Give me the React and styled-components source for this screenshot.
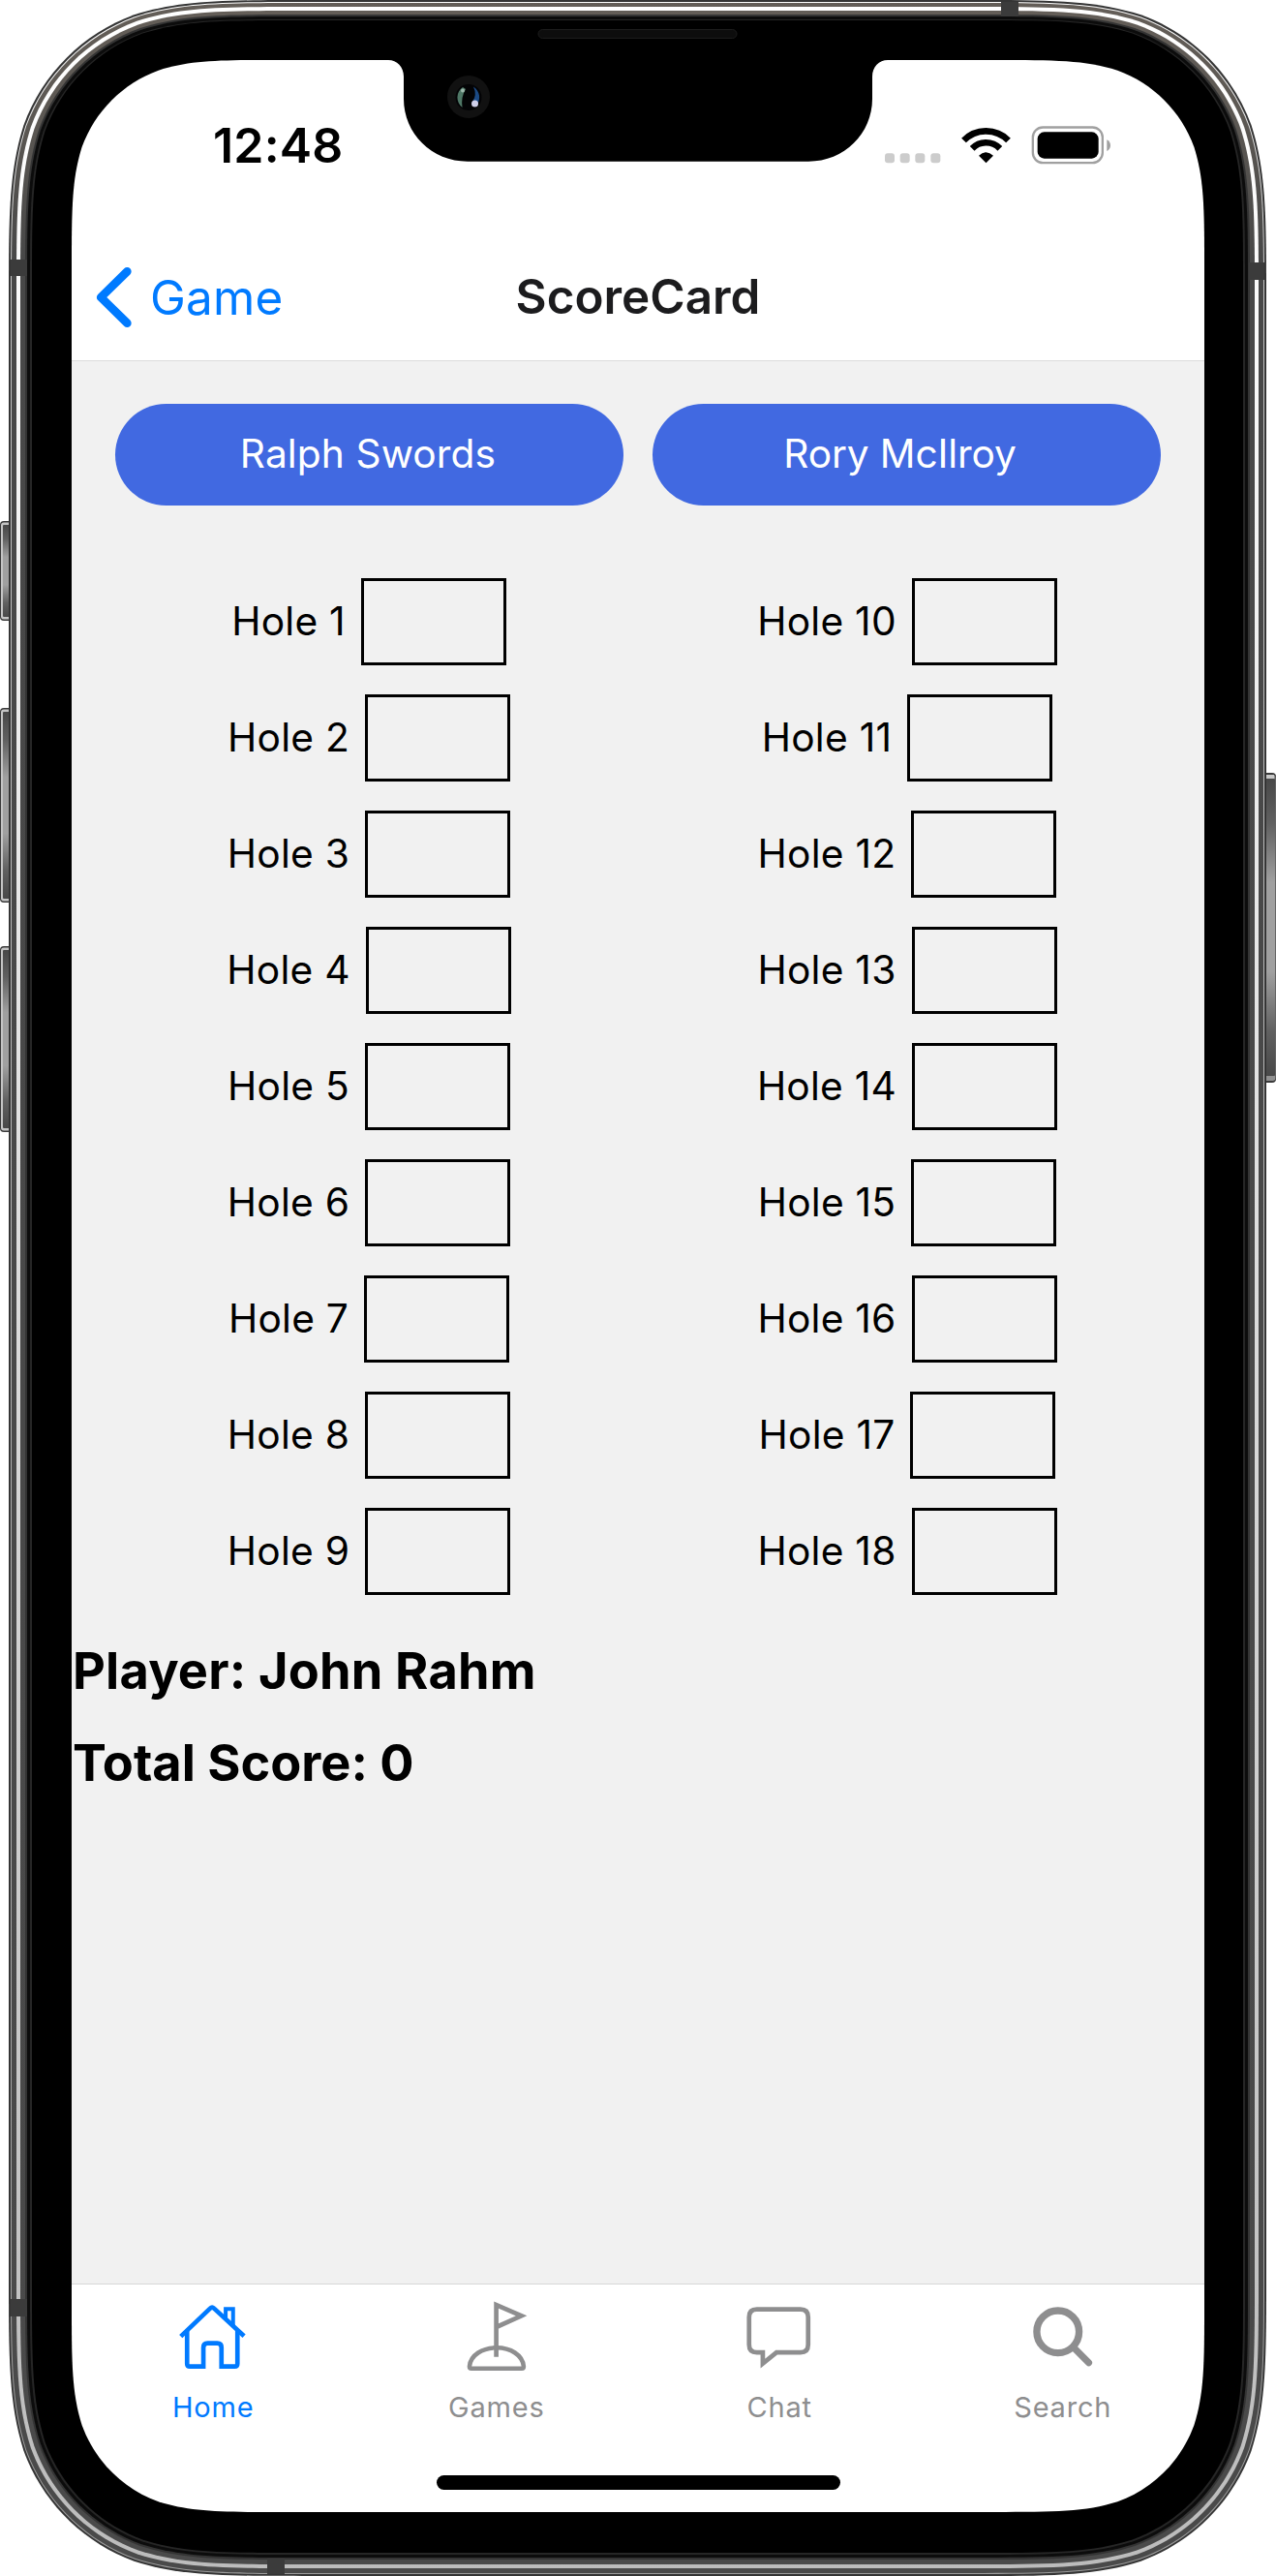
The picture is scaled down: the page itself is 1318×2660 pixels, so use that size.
import React from "react";
import styled, { createGlobalStyle } from "styled-components";

const GlobalStyle = createGlobalStyle`
  * { box-sizing: border-box; }
  body { margin: 0; background: #fff; }
`;

const Phone = styled.div`
  position: relative;
  width: 1318px;
  height: 2660px;
  padding: 62px 74px 66px;
  overflow: hidden;
  font-family: Inter, "Liberation Sans", sans-serif;
  color: #000;
`;

const Bezel = styled.svg`
  position: absolute;
  inset: 0;
`;

const Screen = styled.div`
  position: relative;
  display: flex;
  flex-direction: column;
  height: 100%;
`;

const StatusBar = styled.div`
  display: flex;
  justify-content: space-between;
  align-items: center;
  height: 141px;
  padding: 35px 97px 0 146px;
`;

const Clock = styled.span`
  font-size: 50px;
  font-weight: 600;
  line-height: 60px;
  letter-spacing: 0.2px;
`;

const StatusIcons = styled.div`
  display: flex;
  align-items: center;
`;

const NavBar = styled.header`
  display: grid;
  grid-template-columns: 1fr auto 1fr;
  align-items: center;
  height: 170px;
  padding: 39px 24px 0;
  border-bottom: 1px solid #dcdcdc;
`;

const BackButton = styled.button`
  display: flex;
  align-items: center;
  gap: 19px;
  padding: 0;
  border: 0;
  background: none;
  color: #007aff;
  font: 400 49.4px/60px Inter, sans-serif;
  letter-spacing: 0.2px;
`;

const Title = styled.h1`
  margin: 0;
  padding-bottom: 3px;
  font-size: 49.4px;
  font-weight: 600;
  line-height: 60px;
  letter-spacing: 0;
  color: #1c1c1e;
`;

const Content = styled.main`
  flex: 1;
  background: #f1f1f1;
`;

const PlayerButtons = styled.div`
  display: grid;
  grid-template-columns: 1fr 1fr;
  gap: 30px;
  padding: 44px 45px 0;
`;

const PlayerButton = styled.button`
  height: 105px;
  padding: 0 ${(p) => p.$trailing}px 2px 0;
  border: 0;
  border-radius: 53px;
  background: #4169e1;
  color: #fff;
  font: 400 40.7px/50px Inter, sans-serif;
  letter-spacing: ${(p) => p.$tracking}px;
`;

const Holes = styled.div`
  display: grid;
  grid-template-columns: 556px 556px;
  padding: 75px 0 0 29px;
`;

const HoleColumn = styled.div`
  display: flex;
  flex-direction: column;
  gap: 30px;
`;

const HoleRow = styled.label`
  display: flex;
  justify-content: center;
  align-items: center;
  gap: 16px;
  font-size: 40.7px;
  line-height: 48px;
`;

const HoleLabel = styled.span`
  padding-bottom: 1px;
  letter-spacing: 0.25px;
`;

const ScoreInput = styled.input`
  width: 150px;
  height: 90px;
  padding: 0;
  border: 3px solid #000;
  border-radius: 0;
  background: transparent;
`;

const Summary = styled.div`
  display: flex;
  flex-direction: column;
  gap: 31px;
  padding: 46px 0 0 1px;
`;

const SummaryLine = styled.p`
  margin: 0;
  font-size: 52.3px;
  font-weight: 700;
  line-height: 64px;
  letter-spacing: ${(p) => p.$tracking}px;
`;

const TabBar = styled.nav`
  display: grid;
  grid-template-columns: repeat(4, 1fr);
  height: 236px;
  padding-top: 13px;
  border-top: 1px solid #d8d8d8;
`;

const Tab = styled.a`
  display: flex;
  flex-direction: column;
  align-items: center;
  height: 138px;
  color: ${(p) => (p.$active ? "#007aff" : "#8e8e8f")};
  font-size: 29px;
  line-height: 36px;
  letter-spacing: 0.8px;
`;

const TabIcon = styled.svg`
  width: 80px;
  height: 80px;
  margin-bottom: 16px;
  fill: none;
  stroke: currentColor;
`;

const HomeIndicator = styled.div`
  position: absolute;
  left: 451px;
  bottom: 89px;
  width: 417px;
  height: 15px;
  border-radius: 8px;
  background: #000;
`;

/* Continuous-curvature rounded rectangle. */
function squircle(x0, y0, x1, y1, r) {
  const a = 1.52866498 * r, b = 1.08849296 * r, c = 0.86840694 * r, d = 0.63149379 * r;
  const e = 0.07491139 * r, f = 0.37282383 * r, g = 0.16905899 * r;
  return [
    `M${x0 + a} ${y0}H${x1 - a}`,
    `C${x1 - b} ${y0} ${x1 - c} ${y0} ${x1 - d} ${y0 + e}`,
    `C${x1 - f} ${y0 + g} ${x1 - g} ${y0 + f} ${x1 - e} ${y0 + d}`,
    `C${x1} ${y0 + c} ${x1} ${y0 + b} ${x1} ${y0 + a}V${y1 - a}`,
    `C${x1} ${y1 - b} ${x1} ${y1 - c} ${x1 - e} ${y1 - d}`,
    `C${x1 - g} ${y1 - f} ${x1 - f} ${y1 - g} ${x1 - d} ${y1 - e}`,
    `C${x1 - c} ${y1} ${x1 - b} ${y1} ${x1 - a} ${y1}H${x0 + a}`,
    `C${x0 + b} ${y1} ${x0 + c} ${y1} ${x0 + d} ${y1 - e}`,
    `C${x0 + f} ${y1 - g} ${x0 + g} ${y1 - f} ${x0 + e} ${y1 - d}`,
    `C${x0} ${y1 - c} ${x0} ${y1 - b} ${x0} ${y1 - a}V${y0 + a}`,
    `C${x0} ${y0 + b} ${x0} ${y0 + c} ${x0 + e} ${y0 + d}`,
    `C${x0 + g} ${y0 + f} ${x0 + f} ${y0 + g} ${x0 + d} ${y0 + e}`,
    `C${x0 + c} ${y0} ${x0 + b} ${y0} ${x0 + a} ${y0}Z`,
  ].join("");
}

const LAYERS = [
  [9, 0, 1308, 2660, 205, "#353535"],
  [11, 2, 1306, 2658, 203, "url(#rim)"],
  [12, 3, 1305, 2657, 202, "url(#steel)"],
  [17, 7, 1300, 2652, 197, "url(#shine)"],
  [21, 11, 1296, 2648, 193, "url(#steel)"],
  [26, 15, 1291, 2643, 188, "#343434"],
  [28, 17, 1289, 2641, 186, "#0c0c0c"],
  [31, 20, 1286, 2638, 183, "#262626"],
  [33, 21, 1284, 2636, 181, "#000"],
  [74, 62, 1244, 2594, 142, "#fff"],
];

const SIDE_KEYS = [
  [0, 538, 103],
  [0, 731, 201],
  [0, 977, 192],
];

function DeviceFrame() {
  return (
    <Bezel width="1318" height="2660" viewBox="0 0 1318 2660" aria-hidden="true">
      <defs>
        <linearGradient id="steel" gradientUnits="userSpaceOnUse" x1="0" y1="0" x2="0" y2="2660">
          <stop offset="0" stopColor="#645e58" />
          <stop offset="0.045" stopColor="#5c5853" />
          <stop offset="0.1" stopColor="#484848" />
          <stop offset="1" stopColor="#4a4a4a" />
        </linearGradient>
        <linearGradient id="shine" gradientUnits="userSpaceOnUse" x1="0" y1="0" x2="0" y2="2660">
          <stop offset="0" stopColor="#fff" />
          <stop offset="0.12" stopColor="#fafafa" />
          <stop offset="0.6" stopColor="#d4d4d4" />
          <stop offset="1" stopColor="#bcbcbc" />
        </linearGradient>
        <linearGradient id="rim" gradientUnits="userSpaceOnUse" x1="0" y1="0" x2="0" y2="2660">
          <stop offset="0" stopColor="#fff" />
          <stop offset="0.1" stopColor="#c8c8c8" />
          <stop offset="1" stopColor="#9c9c9c" />
        </linearGradient>
        <linearGradient id="key" x1="0" y1="0" x2="0" y2="1">
          <stop offset="0" stopColor="#484848" />
          <stop offset="0.15" stopColor="#606060" />
          <stop offset="0.35" stopColor="#a0a0a0" />
          <stop offset="0.65" stopColor="#a0a0a0" />
          <stop offset="0.85" stopColor="#606060" />
          <stop offset="1" stopColor="#484848" />
        </linearGradient>
      </defs>
      {SIDE_KEYS.map(([x, y, h]) => (
        <g key={y}>
          <rect x={x} y={y} width="16" height={h} rx="4" fill="#3a3a3a" />
          <rect x={x + 1} y={y + 1.5} width="16" height={h - 3} rx="3" fill="#c4c4c4" />
          <rect x={x + 3} y={y + 4} width="16" height={h - 8} rx="1" fill="url(#key)" />
        </g>
      ))}
      <rect x="1300" y="798" width="18" height="320" rx="4" fill="#3a3a3a" />
      <rect x="1300" y="800" width="17.500" height="316" rx="3" fill="#909090" />
      <rect x="1300" y="800" width="16" height="4" fill="#c8c8c8" />
      <rect x="1300" y="804" width="17" height="307" rx="1" fill="url(#key)" />
      {LAYERS.map(([x0, y0, x1, y1, r, fill]) => (
        <path key={x0} d={squircle(x0, y0, x1, y1, r)} fill={fill} />
      ))}
      <path
        fill="#3b3b3b"
        d="M11 268h17v17H11zM11 2374h17v18H11zM1290 271h16v18h-16zM1034 2h18v15h-18zM276 2642h18v16h-18z"
      />
      <path
        fill="#000"
        d="M401 61V62C410 62 417 69 417 79V102C417 138 446 166.700 483 166.700H835C872 166.700 901 138 901 102V79C901 69 908 62 917 62V61Z"
      />
      <rect x="556" y="30.500" width="205" height="9" rx="4.500" fill="#0d0d0d" stroke="#1c1c1c" />
      <circle cx="484" cy="100" r="22" fill="#111" />
      <circle cx="484" cy="100.500" r="13.500" fill="#030305" />
      <path d="M478 90A13 13 0 0 0 477.500 111Q476 100 481 92Z" fill="#4f7766" />
      <path d="M489 89.500A13 13 0 0 1 492 109L488 105Q493 98 489 89.500Z" fill="#1b4a85" />
      <circle cx="478" cy="93.500" r="2" fill="#9db8ac" />
      <circle cx="490.500" cy="107" r="3.500" fill="#d0d0ea" />
    </Bezel>
  );
}

function StatusGlyphs() {
  return (
    <StatusIcons>
      <svg width="234" height="40" viewBox="104 389 702 120">
        <g fill="#ccc">
          {[107, 154, 201, 249].map((x) => (
            <rect key={x} x={x} y="474" width="30" height="30" rx="9" />
          ))}
        </g>
        <g fill="none" stroke="#000" strokeWidth="20">
          <path d="M351.500 434A97 97 0 0 1 489.500 434" />
          <path d="M377.500 459A60 60 0 0 1 463.500 459" />
        </g>
        <path d="M398 481Q420.500 460 443 481L420.500 504Z" />
        <rect x="565.500" y="393.500" width="216" height="110" rx="31" fill="none" stroke="#a0a0a0" strokeWidth="7" />
        <rect x="580" y="408" width="189" height="82" rx="21" />
        <path d="M795 432Q806 438 806 449.500T795 467Z" fill="#a0a0a0" />
      </svg>
    </StatusIcons>
  );
}

const TABS = [
  {
    label: "Home",
    active: true,
    box: "540.75 216 240 240",
    icon: (
      <g strokeWidth="14">
        <path d="M561 338L652 251Q658 245 664 251L757 337" />
        <path d="M580.500 320V422Q580.500 431 589 431H631V372Q631 359 644 359H674Q687 359 687 372V431H728Q736.500 431 736.500 422V320" />
        <path d="M700 282V253H723V304L700 284" strokeWidth="12" />
      </g>
    ),
  },
  {
    label: "Games",
    box: "98.25 216 240 240",
    icon: (
      <g strokeWidth="13.500">
        <path d="M217 401V240L295 274L217 309" strokeWidth="14" strokeMiterlimit="8" />
        <path d="M134 431C137 395 175 373 218 373S299 395 302 431Q302 437 296 437H140Q134 437 134 431Z" />
      </g>
    ),
  },
  {
    label: "Chat",
    box: "975.75 216 240 240",
    icon: (
      <path
        strokeWidth="14"
        strokeMiterlimit="8"
        d="M1026 254H1161Q1185 254 1185 278V363Q1185 387.500 1161 387.500H1087L1044.500 422V387.500H1026Q1002 387.500 1002 363V278Q1002 254 1026 254Z"
      />
    ),
  },
  {
    label: "Search",
    box: "539.25 216 240 240",
    icon: (
      <g strokeWidth="22">
        <circle cx="643.500" cy="323.500" r="65.500" />
        <path d="M695 375L739 419" strokeWidth="21" strokeLinecap="round" />
      </g>
    ),
  },
];

const NINES = [
  [1, 2, 3, 4, 5, 6, 7, 8, 9],
  [10, 11, 12, 13, 14, 15, 16, 17, 18],
];

export default function App() {
  return (
    <Phone>
      <GlobalStyle />
      <DeviceFrame />
      <Screen>
        <StatusBar>
          <Clock>12:48</Clock>
          <StatusGlyphs />
        </StatusBar>
        <NavBar>
          <BackButton>
            <svg width="38" height="64" viewBox="295 822 114 192" fill="none" stroke="currentColor" strokeWidth="26" strokeLinecap="round" strokeLinejoin="round">
              <path d="M395 838L313.500 918L395 998" />
            </svg>
            Game
          </BackButton>
          <Title>ScoreCard</Title>
        </NavBar>
        <Content>
          <PlayerButtons>
            <PlayerButton $tracking={0.1} $trailing={3}>Ralph Swords</PlayerButton>
            <PlayerButton $tracking={-0.15} $trailing={14}>Rory McIlroy</PlayerButton>
          </PlayerButtons>
          <Holes>
            {NINES.map((holes) => (
              <HoleColumn key={holes[0]}>
                {holes.map((n) => (
                  <HoleRow key={n}>
                    <HoleLabel>Hole {n}</HoleLabel>
                    <ScoreInput />
                  </HoleRow>
                ))}
              </HoleColumn>
            ))}
          </Holes>
          <Summary>
            <SummaryLine $tracking={0.2}>Player: John Rahm</SummaryLine>
            <SummaryLine $tracking={0}>Total Score: 0</SummaryLine>
          </Summary>
        </Content>
        <TabBar>
          {TABS.map((t) => (
            <Tab key={t.label} $active={t.active}>
              <TabIcon viewBox={t.box}>{t.icon}</TabIcon>
              {t.label}
            </Tab>
          ))}
        </TabBar>
      </Screen>
      <HomeIndicator />
    </Phone>
  );
}
